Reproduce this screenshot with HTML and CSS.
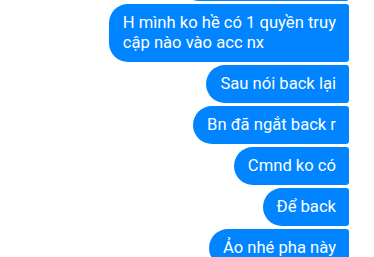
FILE: index.html
```html
<!DOCTYPE html>
<html lang="vi">
<head>
    <meta charset="UTF-8">
    <meta name="viewport" content="width=device-width, initial-scale=1.0">
    <title>Chat</title>
    <link rel="stylesheet" href="styles.css">
</head>

<body>
<div class="thread">
    <!-- previous message, scrolled mostly out of view -->
    <div class="message message-cut"></div>
    <div class="message">H mình ko hề có 1 quyền truy<br>cập nào vào acc nx</div>
    <div class="message">Sau nói back lại</div>
    <div class="message">Bn đã ngắt back r</div>
    <div class="message">Cmnd ko có</div>
    <div class="message">Để back</div>
    <div class="message">Ảo nhé pha này</div>
</div>
</body>
</html>
```

FILE: styles.css
```css
body {
    margin: 0;
    background: #ffffff;
    font-family: Roboto, "Noto Sans", sans-serif;
    overflow: hidden;
}

.thread {
    display: flex;
    flex-direction: column;
    align-items: flex-end;
    gap: 3px;
    padding-right: 25px;
}

.message {
    background: #0084ff;
    color: #ffffff;
    font-size: 16.6px;
    line-height: 20px;
    padding: 9px 13px 9px 14px;
    border-radius: 19px 3px 3px 19px;
}

.message-cut {
    width: 142px;
    height: 20px;
    margin-top: -37px;
}
```
